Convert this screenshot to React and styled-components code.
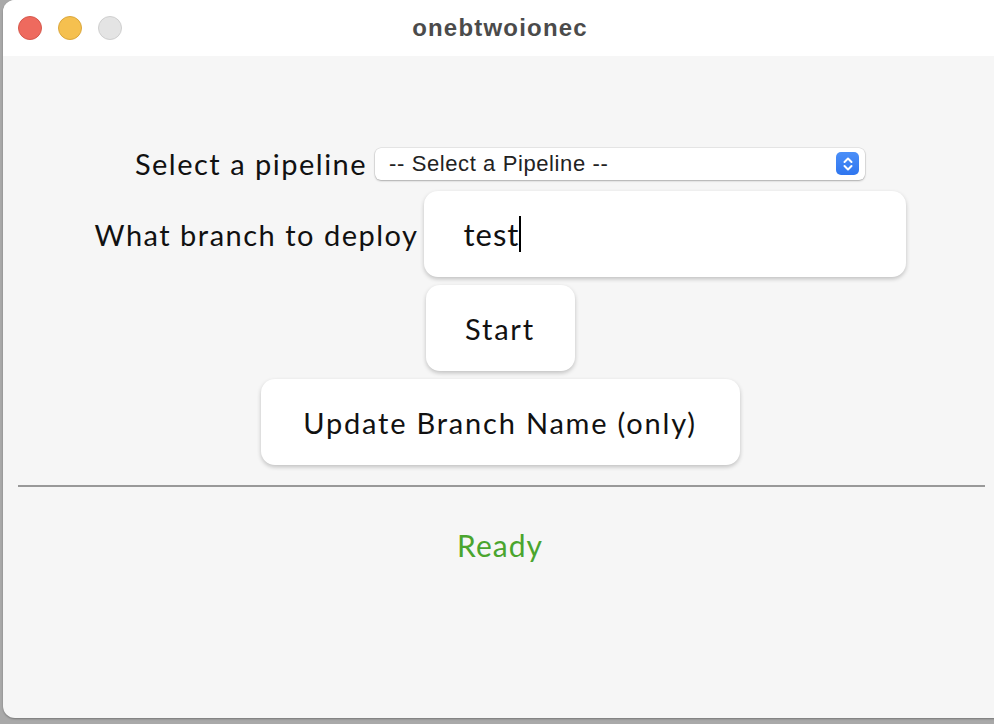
import React from "react";
import styled, { createGlobalStyle } from "styled-components";

const GlobalStyle = createGlobalStyle`
  html, body {
    margin: 0;
    padding: 0;
    background: #a9a9a9;
    overflow: hidden;
  }
  body {
    width: 994px;
    height: 724px;
  }
`;

const Window = styled.div`
  margin-left: 3px;
  width: 1003px;
  height: 718px;
  border-radius: 12px;
  overflow: hidden;
  background: #f6f6f6;
  display: flex;
  flex-direction: column;
  box-shadow: 0 1px 2px rgba(0, 0, 0, 0.3);
`;

const TitleBar = styled.div`
  height: 56px;
  flex-shrink: 0;
  background: #ffffff;
  display: flex;
  align-items: center;
  padding-left: 15px;
  position: relative;
`;

const Lights = styled.div`
  display: flex;
  gap: 16px;
`;

const Light = styled.span`
  width: 24px;
  height: 24px;
  border-radius: 50%;
  box-sizing: border-box;
  background: ${(p) => p.$fill};
  border: 1px solid ${(p) => p.$edge};
`;

const Title = styled.div`
  position: absolute;
  left: 0;
  right: 9px;
  top: 0;
  bottom: 0;
  display: flex;
  align-items: center;
  justify-content: center;
  font-family: "Liberation Sans", Arial, sans-serif;
  font-weight: bold;
  font-size: 24px;
  letter-spacing: 1.2px;
  color: #4b4b4b;
  pointer-events: none;
`;

const Content = styled.div`
  width: 994px;
  display: flex;
  flex-direction: column;
  align-items: center;
  font-family: Lato, "Noto Sans", sans-serif;
  color: #111;
`;

const Row = styled.div`
  display: flex;
  align-items: center;
  justify-content: center;
  gap: ${(p) => p.$gap}px;
  margin-top: ${(p) => p.$top}px;
`;

const Label = styled.label`
  font-size: 29px;
  font-weight: 400;
  letter-spacing: 1.5px;
`;

const Select = styled.div`
  width: 490px;
  height: 32px;
  box-sizing: border-box;
  background: #fff;
  border-radius: 6px;
  box-shadow: 0 0 0 0.5px rgba(0, 0, 0, 0.12), 0 1px 2px rgba(0, 0, 0, 0.25);
  display: flex;
  align-items: center;
  justify-content: space-between;
  padding: 0 6px 0 14px;
  font-family: "Liberation Sans", Arial, sans-serif;
  font-size: 22px;
  letter-spacing: 0.6px;
  color: #222;
`;

const Stepper = styled.span`
  width: 23px;
  height: 23px;
  border-radius: 5px;
  background: linear-gradient(#4b8ff8, #2f76ef);
  display: flex;
  align-items: center;
  justify-content: center;
`;

const TextBox = styled.div`
  width: 482px;
  height: 86px;
  box-sizing: border-box;
  background: #fff;
  border-radius: 14px;
  box-shadow: 0 2px 4px rgba(0, 0, 0, 0.22);
  display: flex;
  align-items: center;
  padding-left: 40px;
  font-size: 31px;
  letter-spacing: 1px;
  color: #111;
`;

const Caret = styled.span`
  display: inline-block;
  width: 2px;
  height: 36px;
  background: #000;
`;

const Button = styled.button`
  width: ${(p) => p.$width}px;
  height: 86px;
  border: none;
  border-radius: 14px;
  background: #fff;
  box-shadow: 0 2px 4px rgba(0, 0, 0, 0.22);
  font-family: Lato, "Noto Sans", sans-serif;
  font-size: 29px;
  letter-spacing: 1.8px;
  color: #111;
  padding: 0;
  cursor: pointer;
`;

const Divider = styled.hr`
  width: 967px;
  margin: 20px 0 0 3px;
  border: none;
  border-top: 2px solid #999;
  height: 0;
`;

const Status = styled.div`
  margin-top: 40px;
  font-size: 30px;
  letter-spacing: 1px;
  color: #4aa52e;
`;

export default function App() {
  return (
    <>
      <GlobalStyle />
      <Window>
        <TitleBar>
          <Lights>
            <Light $fill="#ee6a5e" $edge="#d6584c" />
            <Light $fill="#f5c04f" $edge="#dba73c" />
            <Light $fill="#e4e4e4" $edge="#cfcfcf" />
          </Lights>
          <Title>onebtwoionec</Title>
        </TitleBar>
        <Content>
          <Row $gap={8} $top={90}>
            <Label>Select a pipeline</Label>
            <Select>
              <span>-- Select a Pipeline --</span>
              <Stepper>
                <svg width="12" height="16" viewBox="0 0 12 16" fill="none" stroke="#fff" strokeWidth="2" strokeLinecap="round" strokeLinejoin="round">
                  <path d="M2.5 6 L6 2.5 L9.5 6" />
                  <path d="M2.5 10 L6 13.5 L9.5 10" />
                </svg>
              </Stepper>
            </Select>
          </Row>
          <Row $gap={5} $top={10}>
            <Label>What branch to deploy</Label>
            <TextBox>
              test
              <Caret />
            </TextBox>
          </Row>
          <Row $gap={0} $top={8}>
            <Button $width={149}>Start</Button>
          </Row>
          <Row $gap={0} $top={8}>
            <Button $width={479}>Update Branch Name (only)</Button>
          </Row>
          <Divider />
          <Status>Ready</Status>
        </Content>
      </Window>
    </>
  );
}
